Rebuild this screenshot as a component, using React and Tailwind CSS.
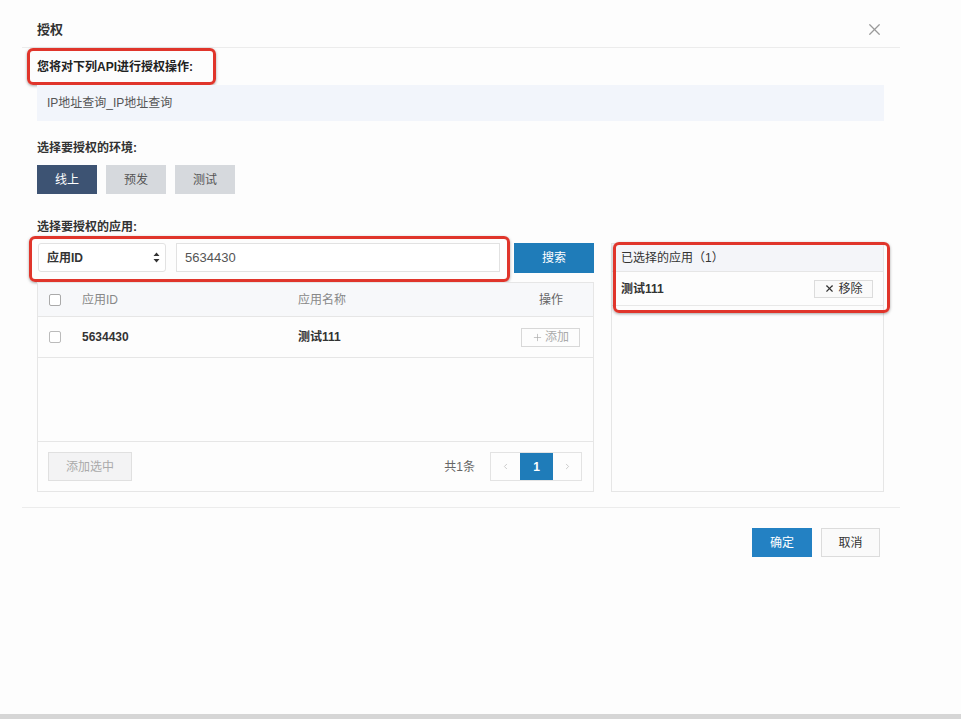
import { ChevronLeft, ChevronRight, Plus, X } from 'lucide-react'

const font = { fontFamily: '"Liberation Sans", "Noto Sans CJK SC", sans-serif' }

function RedBox({ className = '', children }) {
  return (
    <div
      className={`border-[3px] border-[#e0352b] rounded-[6px] shadow-[0_1px_3px_rgba(0,0,0,0.35)] ${className}`}
    >
      {children}
    </div>
  )
}

export default function App() {
  return (
    <div className="w-full h-[719px] bg-[#fdfdfd] flex flex-col text-[12px] text-[#333]" style={font}>
      <div className="flex-1 pl-[22px] pr-[61px]">
        {/* Header */}
        <div className="h-[48px] flex items-center justify-between pt-[12px] pl-[15px] pr-[16px] border-b border-[#ececec]">
          <span className="text-[13px] font-bold text-[#333]">授权</span>
          <X className="w-[19px] h-[19px] text-[#9a9a9a]" strokeWidth={1.6} />
        </div>

        <div className="pl-[15px] pr-[16px]">
          {/* API */}
          <RedBox className="ml-[-10px] w-[189px] h-[37px] flex items-center pl-[7px]">
            <span className="font-bold text-[12px] text-[#222]">您将对下列API进行授权操作:</span>
          </RedBox>
          <div className="h-[36px] bg-[#f2f5fb] flex items-center pl-[10px] text-[#555]">
            IP地址查询_IP地址查询
          </div>

          {/* Environment */}
          <div className="mt-[20px] font-bold h-[14px] leading-[14px]">选择要授权的环境:</div>
          <div className="mt-[10px] flex gap-[9px]">
            <button className="w-[60px] h-[29px] bg-[#3d5373] text-white text-[12px]">线上</button>
            <button className="w-[60px] h-[29px] bg-[#d6d9dd] text-[#555] text-[12px]">预发</button>
            <button className="w-[60px] h-[29px] bg-[#d6d9dd] text-[#555] text-[12px]">测试</button>
          </div>

          {/* Application */}
          <div className="mt-[26px] font-bold h-[14px] leading-[14px]">选择要授权的应用:</div>

          <div className="mt-[2px] flex gap-[17px]">
            {/* Left column */}
            <div className="w-[557px] flex flex-col">
              <div className="flex items-start">
                <RedBox className="ml-[-8px] w-[481px] h-[46px] flex gap-[10px] pl-[6px] pt-[4px]">
                  <div className="w-[128px] h-[29px] bg-white border border-[#e2e2e2] rounded-[3px] flex items-center justify-between pl-[8px] pr-[5px]">
                    <span className="font-bold text-[#333]">应用ID</span>
                    <svg width="7" height="11" viewBox="0 0 7 11">
                      <path d="M3.5 0.5 L6.5 4 L0.5 4 Z M3.5 10.5 L6.5 7 L0.5 7 Z" fill="#333" />
                    </svg>
                  </div>
                  <div className="w-[324px] h-[29px] bg-white border border-[#e2e2e2] flex items-center pl-[8px] text-[13px] text-[#555]">
                    5634430
                  </div>
                </RedBox>
                <button className="ml-[4px] mt-[7px] w-[80px] h-[30px] bg-[#1f7cb9] text-white text-[12px]">搜索</button>
              </div>

              {/* Table */}
              <div className="border border-[#e6e6e6] h-[210px] flex flex-col">
                <div className="h-[34px] bg-[#f7f8fa] border-b border-[#e6e6e6] flex items-center text-[#888]">
                  <span className="ml-[11px] w-[12px] h-[12px] border border-[#aaa] rounded-[2px] bg-white" />
                  <span className="ml-[21px] w-[216px]">应用ID</span>
                  <span className="flex-1">应用名称</span>
                  <span className="mr-[30px] text-[#666]">操作</span>
                </div>
                <div className="h-[41px] border-b border-[#e6e6e6] flex items-center">
                  <span className="ml-[11px] w-[12px] h-[12px] border border-[#bbb] rounded-[2px] bg-white" />
                  <span className="ml-[21px] w-[216px] font-bold text-[#333]">5634430</span>
                  <span className="flex-1 font-bold text-[#333]">测试111</span>
                  <span className="mr-[13px] w-[59px] h-[19px] border border-[#d8d8d8] flex items-center justify-center gap-[2px] text-[#aaa]">
                    <Plus className="w-[11px] h-[11px]" strokeWidth={1.5} />
                    添加
                  </span>
                </div>
                <div className="flex-1 border-b border-[#e6e6e6]" />
                <div className="h-[49px] flex items-center pl-[10px] pr-[11px]">
                  <button className="w-[84px] h-[29px] bg-[#f3f3f4] border border-[#e0e0e0] text-[#aaa] text-[12px]">添加选中</button>
                  <span className="ml-auto mr-[15px] text-[#666]">共1条</span>
                  <div className="flex h-[29px] border border-[#e3e3e3]">
                    <span className="w-[29px] flex items-center justify-center text-[#bbb]">
                      <ChevronLeft className="w-[9px] h-[9px]" />
                    </span>
                    <span className="w-[33px] bg-[#1f7cb9] text-white font-bold flex items-center justify-center">1</span>
                    <span className="w-[28px] flex items-center justify-center text-[#bbb]">
                      <ChevronRight className="w-[9px] h-[9px]" />
                    </span>
                  </div>
                </div>
              </div>
            </div>

            {/* Right column */}
            <div className="relative mt-[7px] w-[273px] h-[249px] border border-[#e6e6e6]">
              <div className="h-[28px] bg-[#f4f5f9] border-b border-[#e6e6e6] flex items-center pl-[9px] text-[#333]">
                已选择的应用（1）
              </div>
              <div className="h-[34px] border-b border-[#e8e8e8] flex items-center justify-between pl-[9px] pr-[10px]">
                <span className="font-bold text-[#333]">测试111</span>
                <span className="w-[59px] h-[18px] border border-[#dcdcdc] bg-[#fafafa] flex items-center justify-center gap-[3px] text-[#333]">
                  <X className="w-[11px] h-[11px]" strokeWidth={2.5} />
                  移除
                </span>
              </div>
              <RedBox className="absolute left-[1px] top-[-2px] w-[277px] h-[71px] pointer-events-none" />
            </div>
          </div>
        </div>

        {/* Footer */}
        <div className="mt-[15px] border-t border-[#ececec] pt-[20px] pr-[20px] flex justify-end gap-[9px]">
          <button className="w-[60px] h-[29px] bg-[#2381c3] text-white text-[12px]">确定</button>
          <button className="w-[59px] h-[29px] bg-[#fafafa] border border-[#dcdcdc] text-[#333] text-[12px]">取消</button>
        </div>
      </div>
      <div className="h-[5px] bg-[#d6d6d6]" />
    </div>
  )
}
